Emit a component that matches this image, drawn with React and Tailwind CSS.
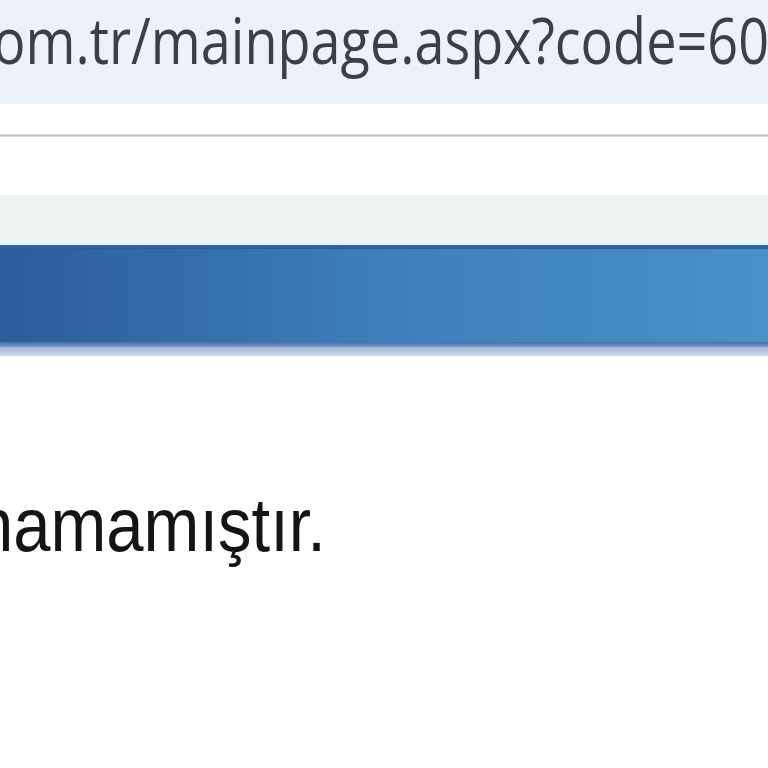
import React from 'react';

export default function App() {
  return (
    <div className="w-[768px] h-[768px] overflow-hidden bg-[#fffffd] flex flex-col">
      {/* address bar */}
      <div className="h-[104px] bg-[#edf2fa] overflow-hidden flex items-start">
        <div
          className="ml-[-7px] mt-[-2px] whitespace-nowrap text-[54px] leading-[70px] text-[#3c3f44] origin-top scale-y-[1.17]"
          style={{ fontFamily: '"Open Sans", "Noto Sans", sans-serif' }}
        >
          om.tr/mainpage.aspx?code=6017
        </div>
      </div>
      <div className="h-[30px] bg-white" />
      <div className="h-[3px] bg-gradient-to-b from-[#dcdcdc] via-[#c4c4c4] to-[#e6e6e6]" />
      <div className="h-[58px] bg-white" />
      {/* tab strip */}
      <div className="h-[43px] bg-[#eef3f3]" />
      <div className="h-[7px] bg-gradient-to-b from-[#eef3f3] to-[#e2f3fb]" />
      {/* blue header bar */}
      <div className="h-[102px] flex flex-col">
        <div className="h-[4px] bg-gradient-to-b from-[#3b679e] to-[#2c5a98]" />
        <div className="flex-1 bg-gradient-to-r from-[#2c5b9b] via-[#3d7fba] to-[#4a90c9]" />
        <div className="h-[5px] bg-gradient-to-b from-[#3f6fab] to-[#7f9bcb]" />
      </div>
      <div className="h-[9px] bg-gradient-to-b from-[#a8b9da] to-[#ccd7ec]" />
      {/* content */}
      <div className="flex-1 bg-[#fffffd] overflow-hidden">
        <div
          className="ml-[-24px] mt-[134px] whitespace-nowrap text-[67px] leading-[62px] text-[#141414] origin-top scale-y-[1.13]"
          style={{ fontFamily: '"Liberation Sans", Arial, sans-serif' }}
        >
          namamıştır.
        </div>
      </div>
    </div>
  );
}
